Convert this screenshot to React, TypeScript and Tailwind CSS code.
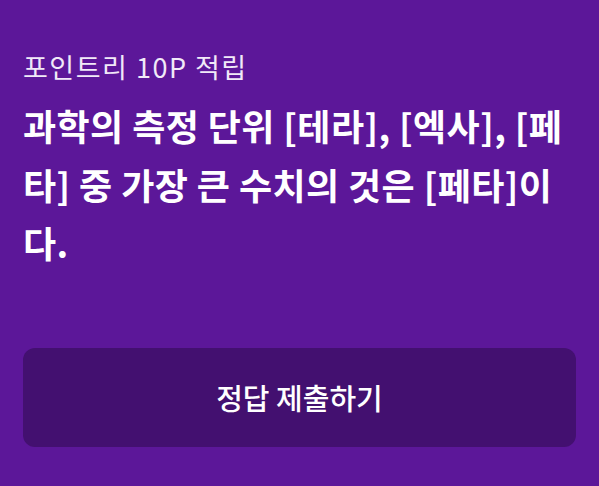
import React from 'react';

export default function App() {
  return (
    <div
      className="w-[599px] h-[486px] bg-[#5c1799] text-white flex flex-col px-[23px] pt-[51px]"
      style={{ fontFamily: '"Noto Sans CJK KR", "Noto Sans", sans-serif' }}
    >
      {/* 상단 문구 */}
      <p className="text-[27px] leading-[32px] tracking-[1.5px] text-[#f1e9f8]">포인트리 10P 적립</p>

      {/* 퀴즈 문제 */}
      <h1 className="mt-[13px] text-[36px] leading-[58.5px] tracking-[0.4px] font-bold">
        과학의 측정 단위 [테라], [엑사], [페타] 중 가장 큰 수치의 것은 [페타]이다.
      </h1>

      {/* 제출 버튼 */}
      <button className="mt-auto mb-[39px] h-[99px] w-full rounded-[12px] bg-[#431070] text-[29px] font-medium text-white">
        정답 제출하기
      </button>
    </div>
  );
}
